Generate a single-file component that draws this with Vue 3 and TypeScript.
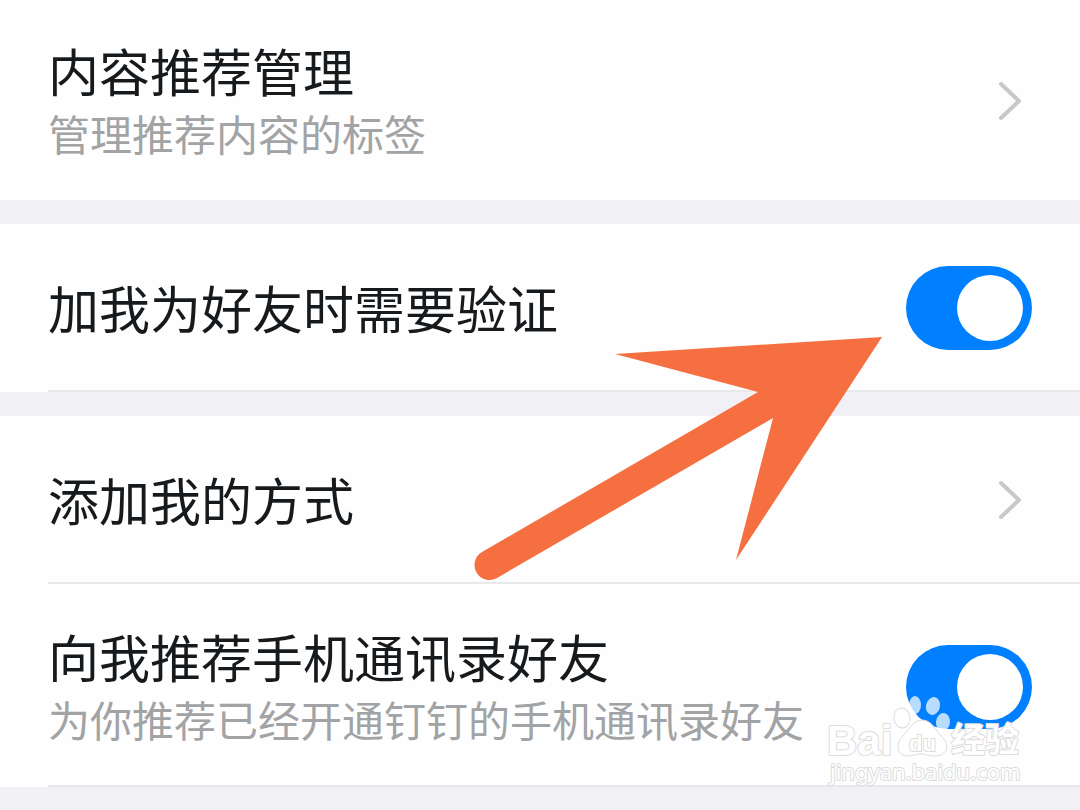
<script setup lang="ts">
import { ref } from 'vue'

interface SettingRow {
  id: string
  title: string
  hint?: string
  kind: 'link' | 'switch'
  arrow?: boolean
  mark?: boolean
  divider?: boolean
}

const groups = ref<SettingRow[][]>([
  [{ id: 'content', title: '内容推荐管理', hint: '管理推荐内容的标签', kind: 'link' }],
  [{ id: 'verify', title: '加我为好友时需要验证', kind: 'switch', arrow: true, divider: true }],
  [
    { id: 'methods', title: '添加我的方式', kind: 'link', divider: true },
    {
      id: 'contacts',
      title: '向我推荐手机通讯录好友',
      hint: '为你推荐已经开通钉钉的手机通讯录好友',
      kind: 'switch',
      mark: true,
      divider: true,
    },
  ],
])

const enabled = ref<Record<string, boolean>>({ verify: true, contacts: true })
</script>

<template>
  <main class="settings">
    <ul v-for="(group, index) in groups" :key="index" class="group">
      <li v-for="row in group" :key="row.id" class="item" :class="{ divider: row.divider }">
        <a v-if="row.kind === 'link'" class="row" href="#">
          <span class="copy">
            <span class="title">{{ row.title }}</span>
            <span v-if="row.hint" class="hint">{{ row.hint }}</span>
          </span>
          <svg class="chevron" viewBox="0 0 26 42" aria-hidden="true">
            <path d="M3 4 L21 21 L3 38" />
          </svg>
        </a>
        <label v-else class="row" :class="{ tall: row.hint }" :for="row.id">
          <span class="copy">
            <span class="title">{{ row.title }}</span>
            <span v-if="row.hint" class="hint">{{ row.hint }}</span>
          </span>
          <input :id="row.id" v-model="enabled[row.id]" class="switch" type="checkbox" role="switch" />
        </label>

        <svg v-if="row.arrow" class="arrow" viewBox="474 336 408 246" aria-hidden="true">
          <path
            d="M882 337 L615 354 L758 392 L482 552 A15 15 0 0 0 497 578 L773 418 L736 560 Z"
          />
        </svg>

        <svg v-if="row.mark" class="mark" viewBox="825 690 200 100" aria-hidden="true">
          <g class="toes">
            <ellipse cx="915" cy="705" rx="6" ry="9" />
            <ellipse cx="933" cy="706" rx="7" ry="9" transform="rotate(14 933 706)" />
            <ellipse class="outlined" cx="902" cy="718" rx="8" ry="10" transform="rotate(-8 902 718)" />
            <ellipse cx="943" cy="722" rx="7" ry="9" transform="rotate(6 943 722)" />
          </g>
          <path
            class="pad"
            d="M922 720 C932 720 935 730 941 736 C951 744 947 756 935 756 C928 756 926 754 921 754 C916 754 914 756 908 756 C896 756 896 743 902 737 C909 730 913 720 922 720 Z"
          />
          <text class="brand" x="827" y="755">Bai</text>
          <text class="du" x="909" y="751">du</text>
          <text class="cjk" x="951" y="752">经验</text>
          <text class="site" x="830" y="780">jingyan.baidu.com</text>
        </svg>
      </li>
    </ul>
  </main>
</template>

<style>
body {
  margin: 0;
  background: #f0f0f5;
}
</style>

<style scoped>
.settings {
  display: flex;
  flex-direction: column;
  gap: 24px;
  padding-bottom: 23px;
  font-family: "Noto Sans CJK SC", "Noto Sans", sans-serif;
}

.group {
  margin: 0;
  padding: 0;
  list-style: none;
  background: #fefefe;
}

.item {
  position: relative;
}

.divider::after {
  content: "";
  display: block;
  height: 2px;
  margin-left: 48px;
  background: #e9e9ec;
}

.row {
  display: flex;
  align-items: center;
  justify-content: space-between;
  gap: 24px;
  padding: 42px 48px 40px;
  color: #171a1d;
  text-decoration: none;
}

.row.tall {
  padding-top: 44px;
  padding-bottom: 39px;
}

.copy {
  box-sizing: border-box;
  display: flex;
  flex-direction: column;
  gap: 11px;
  min-height: 84px;
  padding-bottom: 3px;
  justify-content: center;
}

.title {
  font-size: 51px;
  line-height: 56px;
}

.hint {
  font-size: 42px;
  line-height: 48px;
  color: #a2a3a5;
}

.chevron {
  flex: none;
  width: 26px;
  height: 42px;
  margin-right: 8px;
  fill: none;
  stroke: #c8c8ca;
  stroke-width: 4;
  stroke-linecap: round;
  stroke-linejoin: round;
}

.switch {
  appearance: none;
  flex: none;
  display: flex;
  align-items: center;
  box-sizing: border-box;
  width: 126px;
  height: 84px;
  margin: 0;
  padding: 9px;
  border-radius: 42px;
  background: #c8c8ca;
}

.switch::before {
  content: "";
  width: 66px;
  height: 66px;
  border-radius: 50%;
  background: #fff;
}

.switch:checked {
  justify-content: flex-end;
  background: #0080ff;
}

.arrow {
  position: absolute;
  z-index: 1;
  top: 112px;
  right: 198px;
  width: 408px;
  height: 246px;
  fill: #f66f40;
  pointer-events: none;
}

.mark {
  position: absolute;
  right: 55px;
  bottom: -3px;
  width: 200px;
  height: 100px;
  fill: #fff;
  stroke: #dcdcdc;
  stroke-width: 1;
  pointer-events: none;
}

.toes {
  fill-opacity: 0.72;
  stroke: none;
}

.outlined {
  stroke: #dcdcdc;
}

.mark text {
  paint-order: stroke;
  stroke-width: 2;
  stroke-linejoin: round;
}

.brand {
  font: 700 42px "Liberation Sans", sans-serif;
}

.du {
  font: 700 22px "Liberation Sans", sans-serif;
}

.cjk {
  font: 700 34px "Noto Sans CJK SC", sans-serif;
}

.site {
  font: 400 22px "Noto Sans", sans-serif;
}
</style>
